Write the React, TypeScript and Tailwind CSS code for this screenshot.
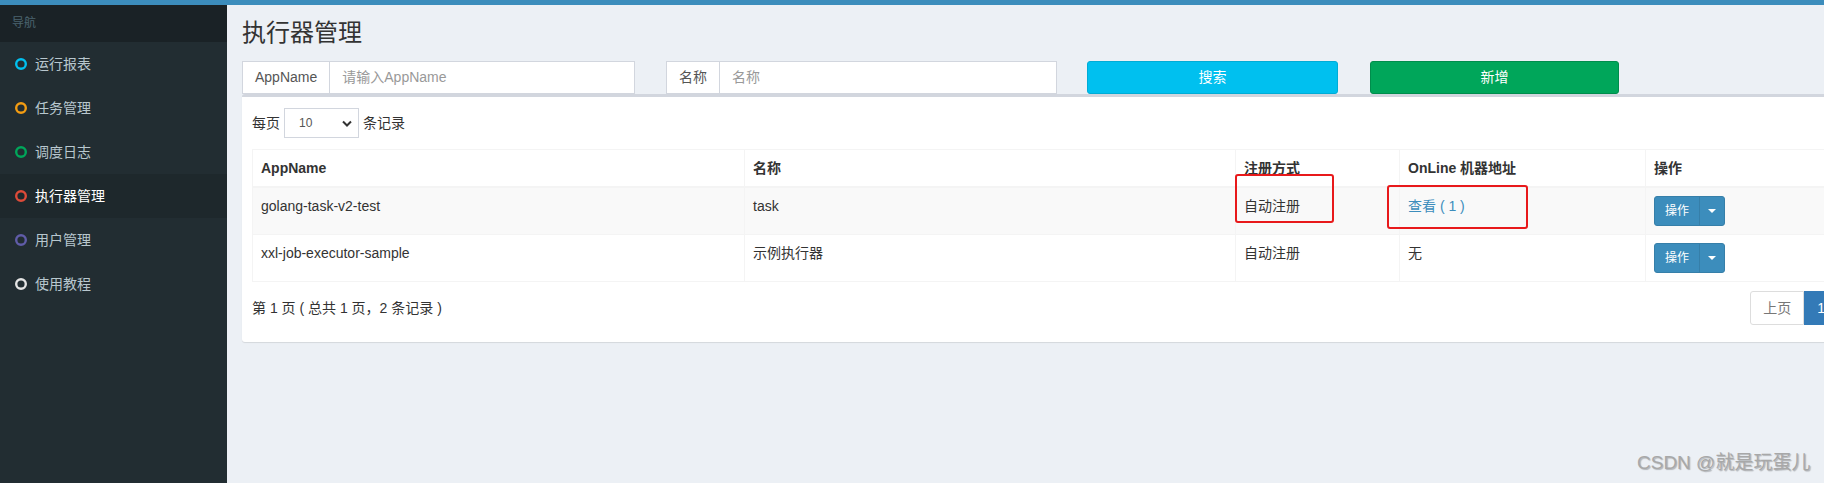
import React from "react"

const menu = [
  { label: "运行报表", color: "#00c0ef" },
  { label: "任务管理", color: "#f39c12" },
  { label: "调度日志", color: "#00a65a" },
  { label: "执行器管理", color: "#dd4b39", active: true },
  { label: "用户管理", color: "#605ca8" },
  { label: "使用教程", color: "#e4e4e4" },
]

const rows = [
  { app: "golang-task-v2-test", name: "task", type: "自动注册", online: "查看 ( 1 )", link: true },
  { app: "xxl-job-executor-sample", name: "示例执行器", type: "自动注册", online: "无", link: false },
]

function Ring({ color }: { color: string }) {
  return (
    <svg width="12" height="12" viewBox="0 0 12 12" className="shrink-0">
      <circle cx="6" cy="6" r="4.8" fill="none" stroke={color} strokeWidth="2.4" />
    </svg>
  )
}

function SplitButton() {
  return (
    <div className="inline-flex h-[30px] rounded-[3px] border border-[#367fa9] bg-[#3c8dbc] text-[12px] text-white">
      <span className="flex items-center px-[10px]">操作</span>
      <span className="flex items-center border-l border-[#367fa9] px-[8px]">
        <span className="block h-0 w-0 border-x-4 border-t-4 border-x-transparent border-t-white" />
      </span>
    </div>
  )
}

function InputGroup({ label, placeholder, width }: { label: string; placeholder: string; width: string }) {
  return (
    <div className={`flex h-[33px] ${width}`}>
      <span className="flex items-center border border-[#d2d6de] bg-white px-3 text-[#555]">{label}</span>
      <input
        className="min-w-0 flex-1 border border-l-0 border-[#d2d6de] bg-white px-3 text-[#555] outline-none placeholder:text-[#999]"
        placeholder={placeholder}
      />
    </div>
  )
}

export default function App() {
  return (
    <div className="relative h-[483px] w-[1824px] overflow-hidden bg-[#ecf0f5] font-['Liberation_Sans','Noto_Sans_CJK_SC',sans-serif] text-[14px] text-[#333]">
      <div className="h-[5px] bg-[#3c8dbc]" />
      <div className="flex h-[478px]">
        {/* sidebar */}
        <aside className="w-[227px] shrink-0 bg-[#222d32]">
          <div className="h-[37px] bg-[#1a2226] px-3 text-[12px] leading-[37px] text-[#4b646f]">导航</div>
          {menu.map((item) => (
            <div
              key={item.label}
              className={`flex h-[44px] items-center pl-[15px] ${item.active ? "bg-[#1e282c] text-white" : "text-[#b8c7ce]"}`}
            >
              <Ring color={item.color} />
              <span className="ml-[8px] leading-5">{item.label}</span>
            </div>
          ))}
        </aside>

        {/* content */}
        <main className="min-w-0 flex-1 overflow-hidden">
          <div className="w-[1720px] px-[15px] pt-[15px]">
            <h1 className="text-[24px] leading-[26px] text-[#333]">执行器管理</h1>

            <div className="mt-[15px] flex h-[33px]">
              <InputGroup label="AppName" placeholder="请输入AppName" width="w-[393px]" />
              <div className="ml-[31px]">
                <InputGroup label="名称" placeholder="名称" width="w-[391px]" />
              </div>
              <button className="ml-[30px] h-[33px] w-[251px] rounded-[3px] border border-[#00acd6] bg-[#00c0ef] text-white">
                搜索
              </button>
              <button className="ml-[32px] h-[33px] w-[249px] rounded-[3px] border border-[#008d4c] bg-[#00a65a] text-white">
                新增
              </button>
            </div>

            <div className="rounded-[3px] border-t-[3px] border-[#d2d6de] bg-white px-[10px] pt-[11px] shadow-[0_1px_1px_rgba(0,0,0,0.1)]">
              <div className="flex items-center">
                <span>每页</span>
                <div className="mx-1 flex h-[30px] w-[75px] items-center justify-between border border-[#d2d6de] pl-[14px] pr-[6px] text-[12px] text-[#555]">
                  <span>10</span>
                  <svg width="10" height="7" viewBox="0 0 10 7">
                    <path d="M1 1.5 5 5.5 9 1.5" fill="none" stroke="#333" strokeWidth="2" />
                  </svg>
                </div>
                <span>条记录</span>
              </div>

              <table className="mt-[11px] w-full table-fixed border-collapse border border-[#f4f4f4]">
                <colgroup>
                  <col className="w-[492px]" />
                  <col className="w-[491px]" />
                  <col className="w-[164px]" />
                  <col className="w-[246px]" />
                  <col />
                </colgroup>
                <thead>
                  <tr className="border-b-2 border-[#f4f4f4]">
                    {["AppName", "名称", "注册方式", "OnLine 机器地址", "操作"].map((h) => (
                      <th key={h} className="border border-b-2 border-[#f4f4f4] px-2 py-2 text-left align-top font-bold leading-5">
                        {h}
                      </th>
                    ))}
                  </tr>
                </thead>
                <tbody>
                  {rows.map((r, i) => (
                    <tr key={r.app} className={i % 2 === 0 ? "bg-[#f9f9f9]" : "bg-white"}>
                      <td className="border border-[#f4f4f4] px-2 py-2 align-top leading-5">{r.app}</td>
                      <td className="border border-[#f4f4f4] px-2 py-2 align-top leading-5">{r.name}</td>
                      <td className="border border-[#f4f4f4] px-2 py-2 align-top leading-5">{r.type}</td>
                      <td className={`border border-[#f4f4f4] px-2 py-2 align-top leading-5 ${r.link ? "text-[#3c8dbc]" : ""}`}>
                        {r.online}
                      </td>
                      <td className="border border-[#f4f4f4] px-2 py-2 align-top leading-5">
                        <SplitButton />
                      </td>
                    </tr>
                  ))}
                </tbody>
              </table>

              <div className="mt-[9px] flex items-center justify-between pb-[17px]">
                <span>第 1 页 ( 总共 1 页，2 条记录 )</span>
                <div className="mr-[31px] flex h-[34px]">
                  <span className="flex items-center rounded-l-[3px] border border-[#ddd] bg-white px-3 text-[#777]">上页</span>
                  <span className="flex items-center border border-[#337ab7] bg-[#337ab7] px-3 text-white">1</span>
                  <span className="flex items-center rounded-r-[3px] border border-l-0 border-[#ddd] bg-white px-3 text-[#777]">下页</span>
                </div>
              </div>
            </div>
          </div>
        </main>
      </div>

      {/* annotation boxes drawn over the table */}
      <div className="absolute left-[1235px] top-[174px] h-[49px] w-[99px] rounded-[3px] border-2 border-[#e8191b]" />
      <div className="absolute left-[1387px] top-[185px] h-[44px] w-[141px] rounded-[3px] border-2 border-[#e8191b]" />

      {/* watermark */}
      <div className="absolute left-[1637px] top-[452px] text-[19px] leading-[22px] text-[#a8a8a8] [text-shadow:1px_1px_1px_rgba(0,0,0,0.25)]">
        CSDN @就是玩蛋儿
      </div>
    </div>
  )
}
